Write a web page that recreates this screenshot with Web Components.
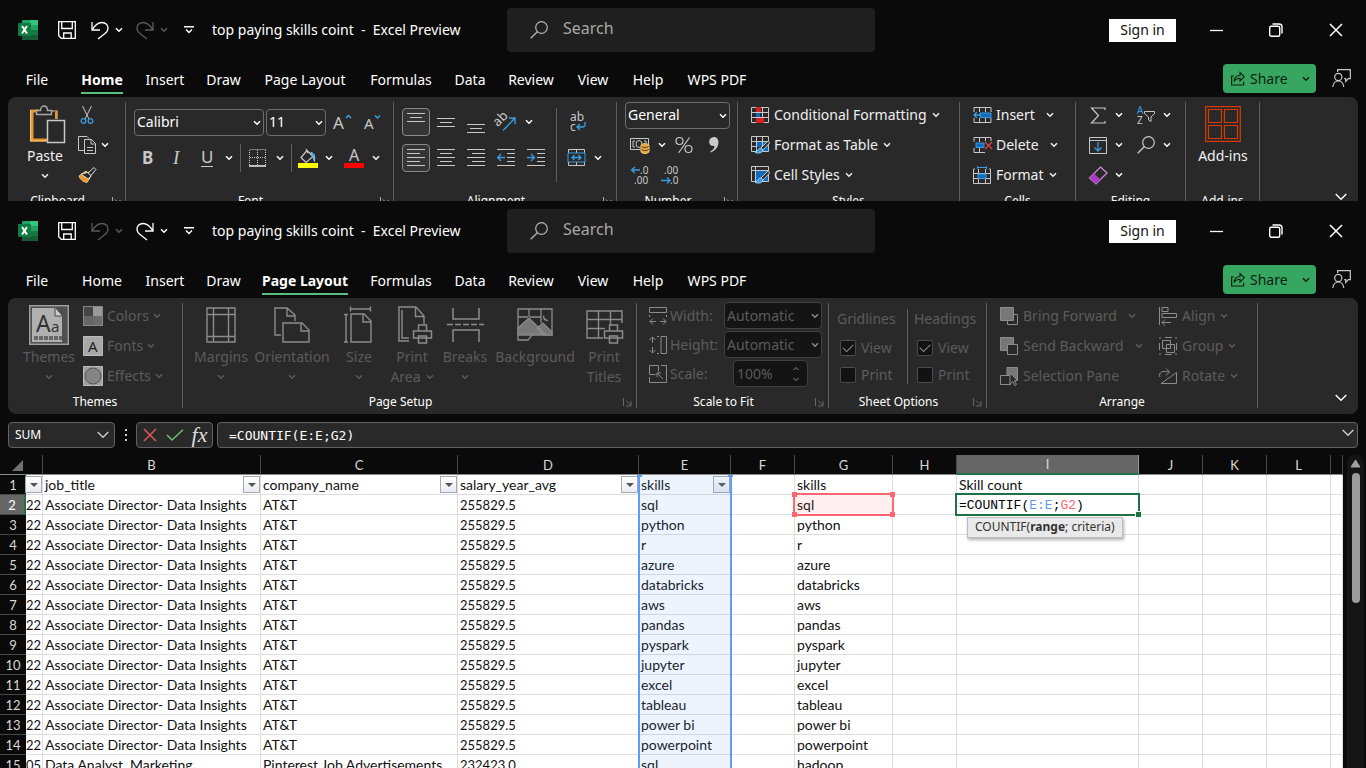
<!DOCTYPE html>
<html lang="en">
<head>
<meta charset="utf-8">
<title>top paying skills coint - Excel Preview</title>
<style>
html, body { margin: 0; height: 100%; }
body { display: flex; flex-direction: column; height: 100vh; overflow: hidden; background: #0a0a0a; color: #fff; font: 14px/20px "Noto Sans", sans-serif; }
.back { flex: none; height: 201px; overflow: hidden; }
.front { flex: none; }
sheet-grid { flex: 1; min-height: 0; }
</style>
</head>
<body>
<excel-window class="back" active="Home" undo="on"><home-ribbon></home-ribbon></excel-window>
<excel-window class="front" active="Page Layout" redo="on"><layout-ribbon></layout-ribbon></excel-window>
<formula-bar></formula-bar>
<sheet-grid></sheet-grid>
<script>
const B = '#3b9be0', F = '#0f6cbd', G = '#c8c8c8';
const T = (x, y, s, t, extra = '') => `<text x="${x}" y="${y}" font-size="${s}" fill="currentColor" stroke="none" font-family="Noto Sans" ${extra}>${t}</text>`;
const lines = list => list.map(([x, y, w]) => `M${x} ${y}h${w}`).join('');
const tableGrid = '<path d="M.5 .5h17v15h-17zM.5 5.500h17M.5 10.500h17M5.500 .5v15M11.500 .5v15"/>';
const brush = `<path d="M17.500 4.500L10 12l2 2 6.500-7z" fill="#292929"/><path d="M10 12c-3 0-3 3-6 4.500c3 1 7 1 8-2.500z" fill="${B}" stroke="#9ad0ff"/>`;
const printer = '<path d="M20 26h14v7h-14z" fill="#292929" stroke="none"/><path d="M20.500 25v-6h8v6M15.500 25h18v7h-18zM20.500 30h8v7h-8z" fill="#292929" stroke-width="1.500"/>';
const ICONS = {
  logo: [20, 20, '<g stroke="none"><rect x="4" width="16" height="20" rx="1" fill="#21a366"/><path d="M12 0h7a1 1 0 0 1 1 1v4h-8z" fill="#33c481"/><path d="M4 5h8v5H4z" fill="#107c41"/><path d="M12 10h8v5h-8z" fill="#107c41"/><path d="M4 10h8v5h8v4a1 1 0 0 1-1 1H5a1 1 0 0 1-1-1z" fill="#185c37"/><rect y="3" width="13" height="13" rx="1" fill="#107c41"/></g><path d="M4 6l5 7.500M9 6l-5 7.500" stroke="#fff" stroke-width="2"/>'],
  save: [18, 18, '<path d="M.7 .7h16.600v16.600h-14l-2.600-2.600zM3.700 1v6.500h10.600v-6.500M5.700 17v-5h7.500v5" stroke-width="1.300"/>'],
  undo: [18, 19, '<path d="M1 1v8h8M1 9C4 4 7 1.500 11 1.500c4 0 6 3 6 5.500 0 2-1 4-3 5.500L7 18" stroke-width="1.300"/>'],
  redo: [18, 19, '<path d="M17 1v8h-8M17 9C14 4 11 1.500 7 1.500c-4 0-6 3-6 5.500 0 2 1 4 3 5.500L11 18" stroke-width="1.300"/>'],
  customize: [10, 8, '<path d="M0 .7h10M2 3.500l3 3 3-3" stroke-width="1.400"/>'],
  chevron: [8, 6, '<path d="M1 1.200l3 3 3-3" stroke-width="1.500"/>'],
  chevronBig: [12, 8, '<path d="M.7 1l5.300 5.300L11.300 1" stroke-width="1.400"/>'],
  search: [18, 18, '<circle cx="11.500" cy="6.500" r="5.800" stroke-width="1.200"/><path d="M7.300 10.700L.7 17.300" stroke-width="1.300"/>'],
  min: [13, 13, '<path d="M0 6.500h13" stroke-width="1.300"/>'],
  restore: [14, 14, '<rect x=".7" y="3.200" width="10" height="10" rx="1.500" stroke-width="1.400"/><path d="M3.500 1h6.500q3 0 3 3v6.500" stroke-width="1.400"/>'],
  close: [14, 14, '<path d="M1 1l12 12M13 1L1 13" stroke-width="1.500"/>'],
  share: [14, 15, '<path d="M3 5H.6v9h12v-3.500" stroke-width="1.200"/><path d="M3 10.500C3.500 6.500 6 4.500 9 4.500V1.500l4.300 4.300L9 10V7.200C6.500 7.200 4.500 8 3 10.500z" stroke-width="1.100"/>'],
  comments: [19, 19, '<path d="M5.600 3V.7h12.700v9h-2l-2.600 2.800v-2.800h-1.500" stroke-width="1.200"/><circle cx="6.300" cy="8" r="3.600" stroke-width="1.200"/><path d="M.8 18c.5-4 3-6 5.500-6s5 2 5.500 6" stroke-width="1.200"/>'],
  paste: [30, 38, '<path d="M9 6H2v29h15" stroke="#e8962a" stroke-width="3"/><path d="M.6 5v31H16M20 6h7v8" stroke="#f2c879" stroke-width="1.200"/><path d="M26 7v7" stroke="#e8962a" stroke-width="2"/><path d="M6.500 9.500v-4h4c0-6 7-6 7 0h4v4z" stroke="#a8a8a8" stroke-width="1.400" fill="#292929"/><rect x="17.500" y="15.500" width="17" height="22" stroke="#c8c8c8" stroke-width="1.500" fill="#292929"/>'],
  cut: [14, 18, `<path d="M2.500 0l6.500 13M11.500 0L5 13" stroke="${G}"/><circle cx="3.500" cy="15" r="2.300" stroke="${B}" stroke-width="1.300"/><circle cx="10.500" cy="15" r="2.300" stroke="${B}" stroke-width="1.300"/>`],
  copy: [18, 18, '<path d="M6 14.500H.5V.5H9l2 2M6.500 3.500h7l4 4v10h-11zM13 4v4h4M9 11.500h6M9 14.500h6"/>'],
  painter: [19, 16, '<path d="M1 9l7-5 5 5-4 6.500q-6-1-8-6.500z" fill="#e8962a" stroke="#f2c879"/><path d="M3 7l9-2 1 4-3 3z" fill="#292929" stroke="#ddd"/><path d="M10 6l6-5.500 2 2L13 8.500z" fill="#292929" stroke="#ddd"/>'],
  growA: [18, 16, T(0, 15, 17, 'A') + `<path d="M13 4l2.500-2.500L18 4" stroke="${B}" stroke-width="1.500"/>`],
  shrinkA: [17, 16, T(0, 15, 15, 'A') + `<path d="M11 1.500l2.500 2.500L16 1.500" stroke="${B}" stroke-width="1.500"/>`],
  bold: [14, 18, T(1, 15, 17, 'B', 'font-weight="bold"')],
  italic: [12, 18, T(2, 15, 19, 'I', 'font-style="italic" style="font-family:Liberation Serif"')],
  underline: [14, 20, T(1, 15, 17, 'U') + '<path d="M1 18.500h12"/>'],
  borders: [18, 18, '<path d="M1.500 .5h16M.5 1v15M8.500 1v15M16.500 1v15M1 8.500h16" stroke-dasharray="1 1"/><path d="M0 17h17" stroke="#fff" stroke-width="1.400"/>'],
  fill: [20, 20, `<path d="M9 2.500l6 6-7 6-5-5zM8 1l2 4" stroke-width="1.200"/><path d="M13 4.500c4 1 4 4 3.500 9-1.500-3-1-5-3.500-7z" fill="${B}" stroke="#8cc8f5"/><path d="M0 15h20v5H0z" fill="#ff0" stroke="none"/>`],
  color: [20, 20, T(5, 13, 16, 'A') + '<path d="M0 15h20v5H0z" fill="red" stroke="none"/>'],
  top: [18, 18, `<path d="${lines([[0, .5, 18], [3, 4.5, 12], [0, 8.5, 18]])}"/>`],
  middle: [18, 18, `<path d="${lines([[0, 5.5, 18], [3, 9.5, 12], [0, 13.5, 18]])}"/>`],
  bottom: [18, 18, `<path d="${lines([[0, 11.5, 18], [3, 15.5, 12], [0, 19.5, 18]])}"/>`],
  left: [18, 18, `<path d="${lines([[0, .5, 18], [0, 4.5, 13], [0, 8.5, 18], [0, 12.5, 13], [0, 16.5, 18]])}"/>`],
  center: [18, 18, `<path d="${lines([[0, .5, 18], [3, 4.5, 12], [0, 8.5, 18], [3, 12.5, 12], [0, 16.5, 18]])}"/>`],
  right: [18, 18, `<path d="${lines([[0, .5, 18], [5, 4.5, 13], [0, 8.5, 18], [5, 12.5, 13], [0, 16.5, 18]])}"/>`],
  outdent: [18, 18, `<path d="${lines([[0, .5, 18], [10, 4.5, 8], [10, 8.5, 8], [10, 12.5, 8], [0, 16.5, 18]])}"/><path d="M8 8.500H.7M4 5L.7 8.500 4 12" stroke="${B}" stroke-width="1.400"/>`],
  indent: [18, 18, `<path d="${lines([[0, .5, 18], [10, 4.5, 8], [10, 8.5, 8], [10, 12.5, 8], [0, 16.5, 18]])}"/><path d="M0 8.500h7.500M4 5l3.500 3.500L4 12" stroke="${B}" stroke-width="1.400"/>`],
  orient: [18, 18, `<g transform="rotate(-45 5 10)">${T(-1, 10, 13, 'ab')}</g><path d="M6 17.500L17.500 5.500M12 5h6v6" stroke="${B}" stroke-width="1.400"/>`],
  wrap: [18, 20, T(2, 9, 12, 'ab') + T(2, 19, 12, 'c') + `<path d="M17 10c1 4-1 5-3 5H9M12 12l-3 3 3 3" stroke="${B}" stroke-width="1.400"/>`],
  merge: [18, 18, `<path d="M.5 .5h16v16H.5zM8.500 1v3M8.500 13v4"/><path d="M0 4h17v9H0z" stroke="${B}" fill="#292929"/><path d="M4 8.500h9M6.500 6L4 8.500 6.500 11M10.500 6L13 8.500l-2.500 2.500" stroke="${B}" stroke-width="1.300"/>`],
  money: [20, 18, '<path d="M.5 2.500h18v11H.5zM5 5H3v6h2M14 5h2v2"/><ellipse cx="9" cy="8" rx="3" ry="3.500"/><path d="M11 9.500c0-2.500 8-2.500 8 0v6c0 2.500-8 2.500-8 0z" fill="#e8a33a" stroke="#f7d58c"/><path d="M11 10c1 2 7 2 8 0M11 13c1 2 7 2 8 0" stroke="#5c4010"/>'],
  percent: [18, 18, '<circle cx="4.500" cy="5" r="3.500" stroke-width="1.200"/><circle cx="13.500" cy="13" r="3.500" stroke-width="1.200"/><path d="M14.500 1.500l-11 15.500" stroke-width="1.200"/>'],
  comma: [12, 18, '<path d="M6 1c6 0 7 11-3 15.500l-.7-1Q6.500 13 6.500 10C-.5 11-.5 1 6 1z" fill="currentColor" stroke="none"/>'],
  incDec: [20, 20, T(10, 9, 10, '.0') + T(4, 19, 10, '.00') + `<path d="M10 5H1.500M5 2L1.500 5 5 8" stroke="${B}" stroke-width="1.300"/>`],
  decDec: [20, 20, T(4, 9, 10, '.00') + T(10, 19, 10, '.0') + `<path d="M1 15.500h9M7 12.500l3 3-3 3" stroke="${B}" stroke-width="1.300"/>`],
  cond: [18, 16, tableGrid + `<path d="M5 0h5v5H5zM5 11h8v5H5z" fill="#d8201f" stroke="none"/><path d="M5 6h4v4H5z" fill="${F}" stroke="none"/>`],
  asTable: [18, 18, tableGrid + `<path d="M6 6h5v5H6zM12 6h5v9h-5z" fill="${F}" stroke="none"/>` + brush],
  cellStyles: [18, 18, '<path d="M.5 .5h17v15h-17zM.5 4.500h17M4.500 .5v15"/>' + `<path d="M5 5h12v10H5z" fill="${F}" stroke="none"/>` + brush],
  insert: [19, 16, `<path d="M1 5V.5h17V5M1 11v4.500h17V11M6.500 .5V5M12.500 .5V5M6.500 11v4.500M12.500 11v4.500"/><path d="M7 6h11v4.500H7z" fill="${F}" stroke="${B}"/><path d="M8 8H1M4 5L1 8l3 3" stroke="${B}" stroke-width="1.400"/>`],
  delete: [19, 16, `<path d="M1 5V.5h17V4M1 11v4.500h11M6.500 .5V5M12.500 .5V4M6.500 11v4.500"/><path d="M3 6h8v4.500H3z" fill="${F}" stroke="${B}"/><path d="M12 5l7 7M19 5l-7 7" stroke="#e04040" stroke-width="1.400"/>`],
  format: [18, 18, `<path d="M2 3H.5v14.500h17V3H16M.5 7.500h17M.5 12.500h17M5.500 3v14M12.500 3v14"/><path d="M5 8h8v4.500H5z" fill="${F}" stroke="${B}"/><path d="M4.500 1.500h9M4.500 0v3M13.500 0v3" stroke="${B}"/>`],
  sum: [16, 17, '<path d="M15 3V1H1.500l7 7.500-7 7.500H15v-2" stroke-width="1.200"/>'],
  fillDown: [18, 17, `<path d="M.5 .5h17v16H.5zM.5 3.500h17"/><path d="M9 5v9M5.500 10.500L9 14l3.500-3.500" stroke="${B}" stroke-width="1.300"/>`],
  eraser: [19, 19, '<path d="M11.500 1l6.500 6-11 11-6.500-6z" stroke="#d48be0" stroke-width="1.200"/><path d="M5 7.500L.5 12 7 18l4.500-4.500z" fill="#a83cc0" stroke="none"/>'],
  sort: [18, 19, `<g color="${B}">${T(0, 8, 10, 'A')}</g>` + T(0, 18, 10, 'Z') + '<path d="M7.500 5.500h10v2L14 11v4.500l-2.500-1.500v-3l-4-3.500z"/>'],
  addins: [36, 36, '<path d="M.7 .7h34.600v34.600H.7zM3.500 3.500h13v13h-13zM19.500 3.500h13v13h-13zM3.500 19.500h13v13h-13zM19.500 19.500h13v13h-13z" stroke="#d83b01" stroke-width="1.200"/>'],
  launcher: [9, 9, '<path d="M.5 0v8M3 2.500l4.500 4.500M8 3v5H3"/>'],
  themes: [40, 40, '<rect x=".7" y=".7" width="38.600" height="38.600" fill="#505050" stroke="#a0a0a0" stroke-width="1.400"/><path d="M3 3h23l7 8v26H3z" fill="#b0b0b0" stroke="none"/><path d="M26 3v8h7" fill="#ccc" stroke="#444"/><g color="#333">' + T(7, 27, 23, 'A') + T(22, 27, 15, 'a') + '</g><path d="M5 33h28" stroke="#666" stroke-width="4" stroke-dasharray="4 1"/>'],
  colors: [20, 20, '<g stroke="none"><path d="M0 0h20v20H0z" fill="#666"/><path d="M1 1h9v9H1z" fill="#444"/><path d="M10 1h9v9h-9z" fill="#999"/><path d="M10 10h9v9h-9z" fill="#6c6c6c"/></g><path d="M.5 .5h19v19H.5z" stroke="#888"/>'],
  fonts: [20, 20, '<path d="M.5 .5h19v19H.5z" fill="#a8a8a8" stroke="#bbb"/><g color="#222">' + T(5, 16, 15, 'A') + '</g>'],
  effects: [20, 20, '<path d="M.5 .5h19v19H.5z" fill="#a0a0a0" stroke="#bbb"/><circle cx="10" cy="10" r="8" fill="#858585" stroke="#555"/>'],
  margins: [30, 36, '<path d="M1 1h28v34H1zM7.500 1v34M22.500 1v34M1 7.500h28M1 29.500h28" stroke-width="1.400"/>'],
  orientation: [36, 36, '<path d="M7 28H1V1h12l8 7v6M13 1v8h8M9 16h19l7 7v12H9zM27 16v8h8" stroke-width="1.400"/>'],
  size: [30, 38, '<path d="M6 3h20M6.500 .5v5M26.500 .5v5M2 8v28M0 8.500h4M0 36h4M7 8h13l7 7v21H7zM19 8v8h8" stroke-width="1.400"/>'],
  printArea: [28, 38, '<path d="M11 35H1V1h17l8 9v8M17.500 1v9.500h8.500M4 4v28h7" stroke-width="1.400"/>' + printer],
  breaks: [37, 36, '<path d="M6 1v11h26V1M6 35V23h26v12" stroke-width="1.500"/><path d="M0 17.500h37" stroke-width="1.400" stroke-dasharray="6 2"/>'],
  background: [36, 34, '<path d="M1 1h34v26H1zM1 27v5h10l4-5M12 1v8M24 1v14M1 9h10M13 9h11" stroke-width="1.300"/><path d="M1 20L12 10l16 16H1zM20 20l6-5 9 9v3H26z" fill="#777" stroke-width="1.200"/><path d="M27 7c0 4 3 5 5 5-4 3-8-2-5-5z" fill="currentColor" stroke="none"/>'],
  printTitles: [36, 30, '<path d="M17 28H1V1h35v12M1 9.500h35M1 18.500h18M12.500 1v27M24.500 1v14" stroke-width="1.400"/>' + `<g transform="translate(3 -4)">${printer}</g>`],
  width: [18, 18, '<path d="M.5 .5h17v5H.5zM.5 8v2M17.500 8v2M1 14.500h6M11 14.500h6M4 11.500l-3 3 3 3M14 11.500l3 3-3 3"/>'],
  height: [18, 18, '<path d="M12 .5h5.500v17H12zM8 .5h2M8 17.500h2M3.500 1v6M3.500 11v6M.5 4l3-3 3 3M.5 14l3 3 3-3"/>'],
  scale: [18, 18, '<path d="M12 .5h5.500v17H.5V12M.5 .5h9v6M.5 .5v9h6M14 14L8 8M8 12V8h4"/>'],
  bring: [18, 18, '<path d="M14 7.500h3.500v10h-10V14"/><path d="M.5 .5h13v13H.5z" fill="#777"/>'],
  send: [18, 18, '<path d="M.5 .5h13v13H.5z" fill="#777"/><path d="M7.500 7.500h10v10h-10z" fill="#292929"/>'],
  selection: [19, 19, '<path d="M7 .5h10.500v12H7z" fill="#777"/><path d="M.5 8.500h10v9H.5z" fill="#292929"/><path d="M10 6v11l3-2.500 2 4 1.500-1-2-4h3z" fill="#292929"/>'],
  align: [18, 18, '<path d="M.5 0v18M3 .5h6v4H3zM3 6.500h14.500v4H3zM3 15.500h9M6 12.500l-3 3 3 3"/>'],
  group: [18, 18, '<path d="M3.500 3.500h8v8h-8zM7.500 7.500h8v8h-8z"/><path d="M0 1h2M6 .5h7M16 1h2M0 17h2M6 17.500h7M16 17h2M.5 6v7M17.500 6v7"/>'],
  rotate: [18, 17, '<path d="M2 15.500L17.500 4.500v11zM1 9C-1 4 4 2.500 10 4M7 .5L10.500 4 7 7.500"/>'],
  dots: [4, 14, '<path d="M1 1h2v2H1zM1 6h2v2H1zM1 11h2v2H1z" fill="currentColor" stroke="none"/>'],
  cancel: [14, 14, '<path d="M1 1l12 12M13 1L1 13" stroke="#e05555" stroke-width="1.500"/>'],
  enter: [18, 12, '<path d="M1 6l5 5L17 .7" stroke="#6cc070" stroke-width="1.500"/>'],
  filterArrow: [8, 4, '<path d="M0 0h8L4 4z" fill="#555" stroke="none"/>'],
  corner: [11, 11, '<path d="M11 0v11H0z" fill="#707070" stroke="none"/>'],
  scrollUp: [11, 9, '<path d="M5.500 1l4.500 7H1z" fill="#a0a0a0" stroke="#a0a0a0" stroke-linejoin="round"/>'],
  spinner: [8, 16, '<path d="M1.500 4L4 1.500 6.500 4M1.500 12L4 14.500 6.500 12"/>'],
};

const RESET = `*,:host{box-sizing:border-box}button{font:inherit;color:inherit;background:none;border:0;padding:0;margin:0;display:flex;align-items:center;justify-content:center}input,select{font:inherit;color:inherit;margin:0;outline:0}`;

function define(name, css, html) {
  customElements.define(name, class extends HTMLElement {
    connectedCallback() {
      if (this.shadowRoot) return;
      const a = (key, other = '') => this.getAttribute(key) ?? other;
      this.attachShadow({ mode: 'open' }).innerHTML = `<style>${RESET}${css}</style>${typeof html === 'function' ? html(a, this) : html}`;
    }
  });
}

define('x-icon', ':host{display:inline-flex;flex:none}svg{display:block;overflow:visible}', a => {
  const [w, h, body] = ICONS[a('name')];
  return `<svg width="${w}" height="${h}" viewBox="0 0 ${w} ${h}" fill="none" stroke="currentColor" aria-hidden="true">${body}</svg>`;
});

/* Square icon-only button */
define('icon-button', `
:host{display:block;flex:none;width:30px;height:28px;color:#c8c8c8}
:host([narrow]){width:28px}
:host([disabled]){color:#555}
button{width:100%;height:100%}
:host([pressed]) button{border:1px solid #8a8a8a;border-radius:4px;background:#353535}`,
a => `<button type="button" aria-label="${a('label')}" ${a('disabled', null) !== null ? 'disabled' : ''}><x-icon name="${a('icon')}"></x-icon></button>`);

/* Arrow half of a split button */
define('drop-button', `:host{display:block;flex:none;width:14px;height:28px;color:#fff}:host([disabled]){color:#666}button{width:100%;height:100%}`,
a => `<button type="button" aria-label="More ${a('label')} options" ${a('disabled', null) !== null ? 'disabled' : ''}><x-icon name="chevron"></x-icon></button>`);

/* Icon and label in one row */
define('row-button', `
:host{display:flex;height:30px;color:#f0f0f0}
:host([disabled]){color:#5c5c5c}
button{gap:5px;white-space:nowrap}
.ico{display:flex;justify-content:center;width:18px;color:#c8c8c8}
:host([disabled]) .ico{color:#8c8c8c}
:host([wide]) .ico{width:20px}:host([wide]) button{gap:4px}
.arrow{display:flex}
:host([split]) .arrow{padding-left:6px}`,
a => `<button type="button" ${a('disabled', null) !== null ? 'disabled' : ''}><span class="ico"><x-icon name="${a('icon')}"></x-icon></span><span>${a('label')}</span>${a('arrow') ? '<span class="arrow"><x-icon name="chevron"></x-icon></span>' : ''}</button>`);

/* Tall button: icon over one or two lines of label */
define('big-button', `
:host{display:block;color:#f0f0f0}
:host([disabled]){color:#5c5c5c}
button{flex-direction:column;justify-content:flex-start;width:100%;padding-top:4px}
.ico{height:40px;display:flex;align-items:center;color:#c8c8c8;margin-bottom:2px}
:host([disabled]) .ico{color:#8c8c8c}
.line{display:flex;align-items:center;justify-content:center;gap:5px;height:20px;white-space:nowrap}`,
a => {
  const second = a('label2');
  const arrow = a('arrow') ? '<x-icon name="chevron"></x-icon>' : '';
  return `<button type="button" ${a('disabled', null) !== null ? 'disabled' : ''}><span class="ico"><x-icon name="${a('icon')}"></x-icon></span><span class="line">${a('label')}</span><span class="line">${second}${arrow}</span></button>`;
});

/* Drop-down list */
define('combo-box', `
:host{display:flex;align-items:center}
.box{position:relative;display:flex;flex:1}
select{appearance:none;width:100%;height:27px;border:1px solid #6e6e6e;border-radius:4px;background:#292929;padding:0 2px;color:#fff}
select:disabled{background:#141414;border-color:#404040;color:#5c5c5c;opacity:1}
x-icon{position:absolute;right:3px;top:11px;pointer-events:none}
:host([disabled]) x-icon{color:#8c8c8c}`,
a => `<div class="box"><select aria-label="${a('label')}" ${a('disabled', null) !== null ? 'disabled' : ''}><option>${a('value')}</option></select><x-icon name="chevron"></x-icon></div>`);

define('check-box', `
:host{display:block;color:#5c5c5c}
label{display:flex;align-items:center;gap:5px;height:27px}
input{appearance:none;width:16px;height:16px;border:1px solid #4c4c4c;border-radius:2px;background:#121212;display:grid;place-items:center}
input:checked::before{content:"";width:9px;height:5px;border:solid #8c8c8c;border-width:0 0 1px 1px;transform:rotate(-45deg) translate(1px,-1px)}`,
a => `<label><input type="checkbox" disabled ${a('checked', null) !== null ? 'checked' : ''}>${a('label')}</label>`);

define('ribbon-group', `
:host{display:grid;grid-template:91px 20px / minmax(0,1fr);flex:none;position:relative;padding-top:3px;height:116px}
:host::after{content:"";position:absolute;right:0;top:5px;bottom:6px;width:1px;background:#5e5e5e}
.body{display:flex;padding:0 8px}
.foot{display:grid;grid-template-columns:1fr;font-size:12px;line-height:20px;text-align:center;color:#fff;padding-right:1px}
.foot.has{grid-template-columns:1fr 18px}
.foot button{color:#aaa}
:host([dim]) .foot button{color:#666}`,
a => `<div class="body"><slot></slot></div><div class="foot ${a('launch') ? 'has' : ''}"><span>${a('label')}</span>${a('launch') ? `<button type="button" aria-label="${a('label')} settings"><x-icon name="launcher"></x-icon></button>` : ''}</div>`);

const PANEL = `
:host{display:flex;margin:0 8px;height:116px;background:#292929;border-radius:8px}
.col{display:flex;flex-direction:column}
.two{padding-top:8px;gap:8px}
.row{display:flex;align-items:center;height:30px}
.two .row{height:28px}
.bar{width:1px;background:#5e5e5e;flex:none}
.collapse{margin-left:auto;align-self:flex-end;width:34px;height:32px}`;

define('home-ribbon', PANEL + `
.clip{width:118px}.font{width:268px}.align{width:223px}.num{width:121px}.styles{width:222px}.cells{width:116px}.edit{width:110px}.add{width:74px}
.clip big-button{width:58px;margin-right:2px}
.clip icon-button{width:22px}
.w130{width:130px}.w60{width:60px}.w105{width:105px}
.gap3{gap:2px}.gap2{gap:2px}
.font .bar{height:28px;margin:0 2px 0 4px}
.tint{margin-left:3px}
.align .bar{height:74px;margin:8px 6px 0 6px}
.pad{padding-left:5px}
.edit .second{padding-left:6px}
.add big-button{width:58px}`,
`<ribbon-group class="clip" label="Clipboard" launch="1">
  <big-button icon="paste" label="Paste" arrow="1"></big-button>
  <div class="col"><div class="row"><icon-button icon="cut" label="Cut"></icon-button></div>
  <div class="row"><icon-button icon="copy" label="Copy"></icon-button><drop-button label="copy"></drop-button></div>
  <div class="row"><icon-button icon="painter" label="Format Painter"></icon-button></div></div>
</ribbon-group>
<ribbon-group class="font" label="Font" launch="1">
  <div class="col two"><div class="row gap3"><combo-box class="w130" label="Font" value="Calibri"></combo-box><combo-box class="w60" label="Font size" value="11"></combo-box><icon-button narrow icon="growA" label="Increase font size"></icon-button><icon-button narrow icon="shrinkA" label="Decrease font size"></icon-button></div>
  <div class="row"><icon-button narrow icon="bold" label="Bold"></icon-button><icon-button icon="italic" label="Italic"></icon-button><icon-button icon="underline" label="Underline"></icon-button><drop-button label="underline"></drop-button><span class="bar"></span><icon-button icon="borders" label="Borders"></icon-button><drop-button label="border"></drop-button><span class="bar"></span><icon-button narrow icon="fill" label="Fill colour"></icon-button><drop-button label="fill"></drop-button><icon-button class="tint" icon="color" label="Font colour"></icon-button><drop-button label="font colour"></drop-button></div></div>
</ribbon-group>
<ribbon-group class="align" label="Alignment" launch="1">
  <div class="col two"><div class="row gap2"><icon-button narrow pressed icon="top" label="Top align"></icon-button><icon-button narrow icon="middle" label="Middle align"></icon-button><icon-button narrow icon="bottom" label="Bottom align"></icon-button><icon-button narrow icon="orient" label="Orientation"></icon-button><drop-button label="orientation"></drop-button></div>
  <div class="row gap2"><icon-button narrow pressed icon="left" label="Align left"></icon-button><icon-button narrow icon="center" label="Center"></icon-button><icon-button narrow icon="right" label="Align right"></icon-button><icon-button narrow icon="outdent" label="Decrease indent"></icon-button><icon-button narrow icon="indent" label="Increase indent"></icon-button></div></div>
  <span class="bar"></span>
  <div class="col two"><div class="row"><icon-button narrow icon="wrap" label="Wrap text"></icon-button></div><div class="row"><icon-button narrow icon="merge" label="Merge"></icon-button><drop-button label="merge"></drop-button></div></div>
</ribbon-group>
<ribbon-group class="num" label="Number" launch="1">
  <div class="col"><div class="row"><combo-box class="w105" label="Number format" value="General"></combo-box></div>
  <div class="row"><icon-button icon="money" label="Accounting format"></icon-button><drop-button label="accounting"></drop-button><icon-button icon="percent" label="Percent style"></icon-button><icon-button icon="comma" label="Comma style"></icon-button></div>
  <div class="row"><icon-button icon="incDec" label="Increase decimal"></icon-button><icon-button icon="decDec" label="Decrease decimal"></icon-button></div></div>
</ribbon-group>
<ribbon-group class="styles" label="Styles"><div class="col pad"><row-button icon="cond" label="Conditional Formatting" arrow="1"></row-button><row-button icon="asTable" label="Format as Table" arrow="1"></row-button><row-button icon="cellStyles" label="Cell Styles" arrow="1"></row-button></div></ribbon-group>
<ribbon-group class="cells" label="Cells"><div class="col pad"><row-button split icon="insert" label="Insert" arrow="1"></row-button><row-button split icon="delete" label="Delete" arrow="1"></row-button><row-button icon="format" label="Format" arrow="1"></row-button></div></ribbon-group>
<ribbon-group class="edit" label="Editing"><div class="col"><div class="row"><icon-button narrow icon="sum" label="Sum"></icon-button><drop-button label="sum"></drop-button></div><div class="row"><icon-button narrow icon="fillDown" label="Fill"></icon-button><drop-button label="fill"></drop-button></div><div class="row"><icon-button narrow icon="eraser" label="Clear"></icon-button><drop-button label="clear"></drop-button></div></div>
<div class="col second"><div class="row"><icon-button narrow icon="sort" label="Sort and filter"></icon-button><drop-button label="sort"></drop-button></div><div class="row"><icon-button narrow icon="search" label="Find and select"></icon-button><drop-button label="find"></drop-button></div></div></ribbon-group>
<ribbon-group class="add" label="Add-ins"><big-button icon="addins" label="Add-ins"></big-button></ribbon-group>
<button class="collapse" type="button" aria-label="Ribbon options"><x-icon name="chevronBig"></x-icon></button>`);

define('layout-ribbon', PANEL + `
.themes{width:175px}.setup{width:454px}.scale{width:192px}.sheet{width:158px}.arrange{width:271px}
.themes big-button{width:66px;margin-right:1px}
.tools{display:grid;grid-template-columns:60px 82px 52px 54px 52px 88px 50px}
.fit{display:grid;grid-template-columns:18px 51px 98px;grid-template-rows:29px 29px 29px;column-gap:3px;padding-left:4px;align-items:center;color:#5c5c5c}
.fit>x-icon{color:#8c8c8c}
.spin{position:relative;width:75px;margin-left:9px}
.spin input{width:100%;height:27px;border:1px solid #404040;border-radius:4px;background:#141414;padding:0 3px}
.spin x-icon{position:absolute;right:8px;top:6px;color:#8c8c8c}
.opt{color:#5c5c5c;padding-top:8px}.opt span{height:25px}
.opt check-box{padding-left:3px}
.sheet .bar{height:75px;margin:8px 6px 0 5px}
.opt{width:66px}
.pad{padding-left:5px}.a1{width:164px}`,
`<ribbon-group class="themes" label="Themes">
  <big-button disabled icon="themes" label="Themes" arrow="1"></big-button>
  <div class="col"><row-button wide disabled icon="colors" label="Colors" arrow="1"></row-button><row-button wide disabled icon="fonts" label="Fonts" arrow="1"></row-button><row-button wide disabled icon="effects" label="Effects" arrow="1"></row-button></div>
</ribbon-group>
<ribbon-group dim class="setup" label="Page Setup" launch="1"><div class="tools">
  <big-button disabled icon="margins" label="Margins" arrow="1"></big-button><big-button disabled icon="orientation" label="Orientation" arrow="1"></big-button><big-button disabled icon="size" label="Size" arrow="1"></big-button><big-button disabled icon="printArea" label="Print" label2="Area" arrow="1"></big-button><big-button disabled icon="breaks" label="Breaks" arrow="1"></big-button><big-button disabled icon="background" label="Background"></big-button><big-button disabled icon="printTitles" label="Print" label2="Titles"></big-button></div>
</ribbon-group>
<ribbon-group dim class="scale" label="Scale to Fit" launch="1"><div class="fit">
  <x-icon name="width"></x-icon><span>Width:</span><combo-box disabled label="Width" value="Automatic"></combo-box>
  <x-icon name="height"></x-icon><span>Height:</span><combo-box disabled label="Height" value="Automatic"></combo-box>
  <x-icon name="scale"></x-icon><label for="sc">Scale:</label><div class="spin"><input id="sc" disabled value="100%"><x-icon name="spinner"></x-icon></div></div>
</ribbon-group>
<ribbon-group dim class="sheet" label="Sheet Options" launch="1">
  <div class="col opt"><span>Gridlines</span><check-box checked label="View"></check-box><check-box label="Print"></check-box></div><span class="bar"></span>
  <div class="col opt"><span>Headings</span><check-box checked label="View"></check-box><check-box label="Print"></check-box></div>
</ribbon-group>
<ribbon-group class="arrange" label="Arrange"><div class="col pad a1"><row-button split disabled icon="bring" label="Bring Forward" arrow="1"></row-button><row-button split disabled icon="send" label="Send Backward" arrow="1"></row-button><row-button disabled icon="selection" label="Selection Pane"></row-button></div>
<div class="col"><row-button disabled icon="align" label="Align" arrow="1"></row-button><row-button disabled icon="group" label="Group" arrow="1"></row-button><row-button disabled icon="rotate" label="Rotate" arrow="1"></row-button></div></ribbon-group>
<button class="collapse" type="button" aria-label="Ribbon options"><x-icon name="chevronBig"></x-icon></button>`);

define('title-bar', `
:host{display:grid;grid-template-columns:minmax(0,1fr) 368px minmax(0,1fr);align-items:center;height:60px;padding-left:16px}
.left,.right{display:flex;align-items:center}
.left>x-icon{width:24px;justify-content:center}
icon-button,drop-button{color:#fff}
icon-button{width:26px}drop-button{width:12px}
icon-button[disabled],drop-button[disabled]{color:#5a5a5a}
.save{margin-left:14px}.undo,.redo{margin-left:7px}.more{margin-left:6px}
h1{font:inherit;margin:0 0 0 10px;white-space:pre}
.search{display:flex;align-items:center;gap:15px;height:44px;border-radius:4px;background:#1f1f1f;padding-left:23px;color:#b4b4b4;font-size:16px}
.search input{flex:1;min-width:0;background:none;border:0;padding:0 0 4px}
.search input::placeholder{color:#a8a8a8;opacity:1}
.right{justify-content:flex-end}
.sign{width:67px;height:23px;background:#fff;color:#111;margin-right:10px;white-space:nowrap}
.right icon-button{width:60px}`,
a => {
  const off = key => a(key) ? '' : 'disabled';
  return `<div class="left"><x-icon name="logo"></x-icon><icon-button class="save" icon="save" label="Save"></icon-button>
  <icon-button class="undo" ${off('undo')} icon="undo" label="Undo"></icon-button><drop-button ${off('undo')} label="undo"></drop-button>
  <icon-button class="redo" ${off('redo')} icon="redo" label="Redo"></icon-button><drop-button ${off('redo')} label="redo"></drop-button>
  <icon-button class="more" icon="customize" label="Customize toolbar"></icon-button><h1>top paying skills coint  -  Excel Preview</h1></div>
  <label class="search"><x-icon name="search"></x-icon><input type="search" placeholder="Search" aria-label="Search"></label>
  <div class="right"><button class="sign" type="button">Sign in</button><icon-button icon="min" label="Minimize"></icon-button><icon-button icon="restore" label="Restore"></icon-button><icon-button icon="close" label="Close"></icon-button></div>`;
});

const TABS = ['File', 'Home', 'Insert', 'Draw', 'Page Layout', 'Formulas', 'Data', 'Review', 'View', 'Help', 'WPS PDF'];
define('tab-bar', `
:host{display:flex;align-items:flex-start;height:37px;padding-left:10px}
nav{display:grid;grid-template-columns:54px 76px 50px 67px 96px 96px 42px 80px 44px 66px 72px;justify-items:center}
a{display:block;color:#fff;text-decoration:none;white-space:nowrap;margin-top:7px;line-height:26px;height:27px}
a[aria-current]{font-weight:bold;border-bottom:2px solid #5bbd82}
.share{margin:4px 14px 0 auto;width:93px;height:29px;border-radius:4px;background:#37a660;color:#0b1f12;padding:0 6px 0 8px;gap:5px}
.share span{flex:1;text-align:left}
icon-button{width:22px;margin:4px 14px 0 0}`,
a => `<nav aria-label="Ribbon tabs">${TABS.map(t => `<a href="#" ${t === a('active') ? 'aria-current="page"' : ''}>${t}</a>`).join('')}</nav>
<button class="share" type="button"><x-icon name="share"></x-icon><span>Share</span><x-icon name="chevron"></x-icon></button><icon-button icon="comments" label="Comments"></icon-button>`);

define('excel-window', ':host{display:block}',
a => `<title-bar undo="${a('undo')}" redo="${a('redo')}"></title-bar><tab-bar active="${a('active')}"></tab-bar><slot></slot>`);

define('formula-bar', `
:host{display:flex;flex:none;padding:8px 8px 0;height:41px}
.box{display:flex;align-items:center;height:26px;border:1px solid #626262;border-radius:4px;background:#292929}
.name{width:107px;padding:0 5px 0 6px;font-size:12px}
.name input{width:86px}
input{border:0;background:none;padding:0;min-width:0}
.dots{display:flex;align-items:center;justify-content:center;width:21px;height:26px;color:#ccc}
.ops{width:77px;margin-right:4px}
.ops button{flex:1;height:24px}
.ops .fx{font:italic 22px/22px "Liberation Serif",serif;color:#ddd}
.text{flex:1;padding:0 3px 4px 11px;font:13px "DejaVu Sans Mono",monospace}
.text input{flex:1;padding-top:4px}
.name x-icon,.text x-icon{color:#ccc}`,
`<div class="box name"><input aria-label="Name box" value="SUM"><x-icon name="chevronBig"></x-icon></div><div class="dots"><x-icon name="dots"></x-icon></div>
<div class="box ops"><button type="button" aria-label="Cancel"><x-icon name="cancel"></x-icon></button><button type="button" aria-label="Enter"><x-icon name="enter"></x-icon></button><button class="fx" type="button">fx</button></div>
<div class="box text"><input aria-label="Formula" value="=COUNTIF(E:E;G2)"><x-icon name="chevronBig"></x-icon></div>`);

define('filter-button', `:host{position:absolute;right:0;top:1px;width:17px;height:17px}button{width:17px;height:17px;border:1px solid #a5a9b5;background:linear-gradient(#fff,#e9ecf2)}`,
'<button type="button" aria-label="Filter"><x-icon name="filterArrow"></x-icon></button>');

const SKILLS = ['sql', 'python', 'r', 'azure', 'databricks', 'aws', 'pandas', 'pyspark', 'jupyter', 'excel', 'tableau', 'power bi', 'powerpoint'];
const ROWS = SKILLS.map(s => ['22', 'Associate Director- Data Insights', 'AT&amp;T', '255829.5', s, '', s]);
ROWS.push(['05', 'Data Analyst, Marketing', 'Pinterest Job Advertisements', '232423.0', 'sql', '', 'hadoop']);
const FILTER = '<filter-button></filter-button>';
const FIRST = [FILTER, 'job_title' + FILTER, 'company_name' + FILTER, 'salary_year_avg' + FILTER, 'skills' + FILTER + '<i class="range"><b></b><b></b></i>', '', 'skills', '', 'Skill count'];

define('sheet-grid', `
:host{display:flex;overflow:hidden;color:#111}
.view{flex:1;min-width:0;overflow:hidden}
table{table-layout:fixed;width:100%;border-collapse:separate;border-spacing:0;background:#fff;font:14px/19px Lato,"Noto Sans",sans-serif}
th,td{height:20px;padding:0;position:relative;white-space:nowrap;font-weight:normal}
th,td.num{font-size:13px;line-height:18px;padding-top:1px}
thead th{background:#0a0a0a;color:#d8d8d8;border-right:1px solid #484848;border-bottom:1px solid #8a8a8a;text-align:center}
thead th.sel{background:#666;border-bottom:2px solid #1e7145;border-right-color:#999;line-height:17px}
thead th:first-child{border-right:0}
thead th:first-child x-icon{position:absolute;right:3px;bottom:3px}
tbody th{background:#0a0a0a;color:#d8d8d8;border-bottom:1px solid #484848}
tbody th.sel{background:#666;color:#fff;border-right:2px solid #1e7145}
td{border-right:1px solid #dedede;border-bottom:1px solid #dedede;padding-left:2px}
td:nth-child(2){padding-left:0;padding-right:1px;text-align:right}
.range{position:absolute;z-index:1;left:-1px;top:0;width:94px;height:320px;border:solid #5f9bf7;border-width:0 2px;background:rgba(95,155,247,.11);pointer-events:none}
.range b{position:absolute;top:0;width:5px;height:2px;background:#5f9bf7}
.range b:first-child{left:-3px}.range b:last-child{right:-3px}
.ref{position:absolute;z-index:1;left:-2px;right:-2px;top:-2px;bottom:-2px;border:2px solid #ff6670;background:rgba(255,102,112,.1)}
.ref b{position:absolute;width:5px;height:5px;background:#ff6670}
.ref b:nth-child(1){left:-3px;top:-3px}.ref b:nth-child(2){right:-3px;top:-3px}.ref b:nth-child(3){left:-3px;bottom:-3px}.ref b:nth-child(4){right:-3px;bottom:-3px}
.edit{position:absolute;z-index:1;left:-2px;right:-2px;top:-2px;bottom:-2px;border:2px solid #1e7145;background:#fff;padding:1px 0 0 2px;font:13px/19px "Liberation Mono",monospace;color:#000}
.edit::after{content:"";position:absolute;right:-3px;bottom:-3px;width:5px;height:5px;background:#1e7145;border:solid #fff;border-width:1px 0 0 1px}
.c1{color:#5f9bf7}.c2{color:#ff6670}
.tip{position:absolute;z-index:2;left:10px;top:22px;height:21px;padding:0 7px;border:1px solid #bcbcbc;background:#e9e9e9;color:#333;font:12px/18px "Noto Sans",sans-serif;box-shadow:1px 2px 3px rgba(0,0,0,.3)}
.scroll{flex:none;width:23px;background:#0a0a0a;display:flex;padding-left:4px}
.track{width:17px;border-radius:8px 8px 0 0;background:#151515;display:flex;flex-direction:column;align-items:center;padding-top:4px;gap:5px}
.thumb{width:8px;height:130px;border-radius:4px;background:#9c9c9c}`,
() => {
  const widths = [26, 17, 218, 197, 181, 92, 64, 98, 64, 182, 64, 64, 64];
  const heads = ['A', 'B', 'C', 'D', 'E', 'F', 'G', 'H', 'I', 'J', 'K', 'L', 'M'];
  const row = (cells, n) => `<tr><th scope="row" ${n === 2 ? 'class="sel"' : ''}>${n}</th>${heads.map((h, i) => {
    let extra = '';
    if (n === 2 && h === 'G') extra = '<i class="ref"><b></b><b></b><b></b><b></b></i>';
    if (n === 2 && h === 'I') extra = '<div class="edit">=COUNTIF(<span class="c1">E:E</span>;<span class="c2">G2</span>)</div><div class="tip" role="tooltip">COUNTIF(<b>range</b>; criteria)</div>';
    return `<td ${n > 1 && (h === 'A' || h === 'D') ? 'class="num"' : ''}>${cells[i] || ''}${extra}</td>`;
  }).join('')}</tr>`;
  return `<div class="view"><table><colgroup>${widths.map(w => `<col style="width:${w}px">`).join('')}<col></colgroup>
  <thead><tr><th aria-label="Select all"><x-icon name="corner"></x-icon></th>${heads.map(h => `<th scope="col" ${h === 'I' ? 'class="sel"' : ''}>${h === 'A' || h === 'M' ? '' : h}</th>`).join('')}</tr></thead>
  <tbody>${row(FIRST, 1)}${ROWS.map((r, i) => row(r, i + 2)).join('')}</tbody></table></div>
  <div class="scroll"><div class="track"><x-icon name="scrollUp"></x-icon><div class="thumb"></div></div></div>`;
});
</script>
</body>
</html>
